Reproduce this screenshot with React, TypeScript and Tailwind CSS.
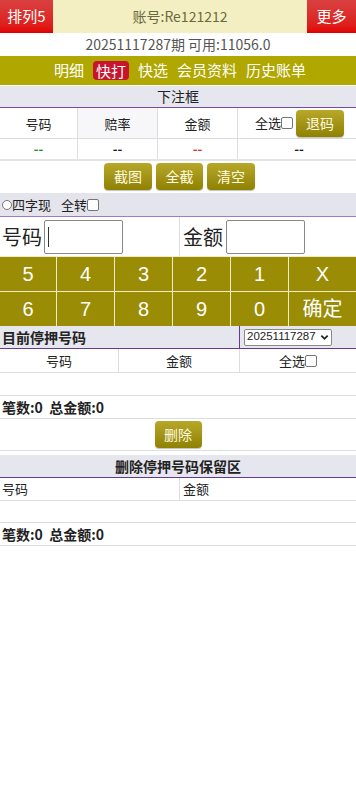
import React from 'react';

const font = { fontFamily: '"Microsoft YaHei", "Noto Sans CJK SC", "Liberation Sans", sans-serif' };

function OliveButton({ label, className = '' }: { label: string; className?: string }) {
  return (
    <button
      className={`h-[27px] rounded-[4px] bg-gradient-to-b from-[#b8a828] to-[#8f8100] text-[14px] text-[#fffbe0] shadow-[0_1px_1px_rgba(0,0,0,0.25)] ${className}`}
    >
      {label}
    </button>
  );
}

function Box() {
  return <span className="inline-block h-[12px] w-[12px] rounded-[2px] border border-[#767676] bg-white align-middle" />;
}

const keys = ['5', '4', '3', '2', '1', 'X', '6', '7', '8', '9', '0', '确定'];

export default function App() {
  return (
    <div className="min-h-[789px] w-[356px] bg-white text-[14px] text-[#222]" style={font}>
      {/* top bar */}
      <div className="flex h-[33px]">
        <div className="flex w-[53px] items-center justify-center bg-gradient-to-b from-[#d84040] to-[#e00000] text-[15px] text-white">
          排列5
        </div>
        <div className="flex flex-1 items-center justify-center bg-[#f3efc3] text-[14px] text-[#6b6a3c]">
          账号:Re121212
        </div>
        <div className="flex w-[49px] items-center justify-center bg-gradient-to-b from-[#d84040] to-[#e00000] text-[15px] text-white">
          更多
        </div>
      </div>

      <div className="flex h-[23px] items-center justify-center text-[14px] text-[#555]">
        20251117287期 可用:11056.0
      </div>

      {/* nav */}
      <div className="flex h-[29px] items-center justify-center gap-[9px] bg-[#b0a700] pl-[4px] text-[15px] text-white">
        <span>明细</span>
        <span className="rounded-[4px] bg-[#c8142c] px-[3px] leading-[19px]">快打</span>
        <span>快选</span>
        <span>会员资料</span>
        <span>历史账单</span>
      </div>

      <div className="mt-[1px] flex h-[22px] items-center justify-center border-b border-[#7a4a9a] bg-[#e6e6ee] text-[14px]">
        下注框
      </div>

      {/* bet table */}
      <div className="grid h-[31px] grid-cols-[78px_80px_80px_1fr] border-b border-[#ddd] text-[13px]">
        <div className="flex items-center justify-center border-r border-[#ddd] pt-[2px]">号码</div>
        <div className="flex items-center justify-center border-r border-[#ddd] bg-[#f7f7fa] pt-[2px]">赔率</div>
        <div className="flex items-center justify-center border-r border-[#ddd] pt-[2px]">金额</div>
        <div className="flex items-center justify-end gap-[3px] pr-[12px]">
          <span className="flex items-center">
            全选<Box />
          </span>
          <OliveButton label="退码" className="w-[48px]" />
        </div>
      </div>
      <div className="grid h-[22px] grid-cols-[78px_80px_80px_1fr] border-b-2 border-[#e4e4e4] text-[13px] font-bold">
        <div className="flex items-center justify-center border-r border-[#ddd] text-[#2a8a2a]">--</div>
        <div className="flex items-center justify-center border-r border-[#ddd]">--</div>
        <div className="flex items-center justify-center border-r border-[#ddd] text-[#e03030]">--</div>
        <div className="flex items-center justify-center pl-[4px]">--</div>
      </div>

      <div className="flex h-[30px] items-center justify-center gap-[4px] pl-[3px]">
        <OliveButton label="截图" className="w-[48px]" />
        <OliveButton label="全截" className="w-[47px]" />
        <OliveButton label="清空" className="w-[48px]" />
      </div>

      <div className="mt-[2px] flex h-[24px] items-center border-b border-[#a07ad0] bg-[#e4e4ec] pl-[2px] text-[13px]">
        <span className="inline-block h-[10px] w-[10px] rounded-full border border-[#767676] bg-white" />
        <span>四字现</span>
        <span className="ml-[10px]">全转</span>
        <Box />
      </div>

      {/* inputs */}
      <div className="flex h-[39px] items-center">
        <div className="flex h-full w-[180px] items-center border-r border-[#ddd] pl-[2px]">
          <span className="text-[20px]">号码</span>
          <div className="ml-[2px] flex h-[34px] w-[79px] items-center rounded-[2px] border border-[#888] pl-[3px]">
            <span className="h-[20px] w-[1px] bg-[#333]" />
          </div>
        </div>
        <div className="flex items-center pl-[3px]">
          <span className="text-[20px]">金额</span>
          <div className="ml-[3px] h-[34px] w-[79px] rounded-[2px] border border-[#888]" />
        </div>
      </div>

      {/* keypad */}
      <div className="grid grid-cols-[56px_57px_57px_57px_57px_1fr] gap-[1px] bg-[#f0ecc4] pt-[1px]">
        {keys.map((k) => (
          <div
            key={k}
            className="flex h-[34px] items-center justify-center bg-[#9b8c05] text-[20px] text-white"
            style={{ fontFamily: '"Liberation Sans", "Noto Sans CJK SC", sans-serif' }}
          >
            {k}
          </div>
        ))}
      </div>

      {/* stopped numbers */}
      <div className="flex h-[23px] border-b border-[#6a3a8a] bg-[#e6e6ee]">
        <div className="flex w-[240px] items-center border-r border-[#6a3a8a] pl-[2px] text-[14px] font-bold">目前停押号码</div>
        <div className="flex items-center pl-[4px]">
          <div
            className="flex h-[17px] w-[88px] items-center justify-between rounded-[2px] border border-[#888] bg-white pl-[2px] pr-[2px] text-[11.5px]"
            style={{ fontFamily: '"Liberation Sans", sans-serif' }}
          >
            20251117287
            <svg width="9" height="9" viewBox="0 0 10 10">
              <path d="M1.5 3 L5 6.5 L8.5 3" stroke="#222" strokeWidth="2" fill="none" />
            </svg>
          </div>
        </div>
      </div>
      <div className="grid h-[24px] grid-cols-[119px_121px_1fr] border-b border-[#ddd] text-[13px]">
        <div className="flex items-center justify-center border-r border-[#ddd]">号码</div>
        <div className="flex items-center justify-center border-r border-[#ddd]">金额</div>
        <div className="flex items-center justify-center">
          全选<Box />
        </div>
      </div>
      <div className="h-[23px] border-b border-[#ddd]" />
      <div className="flex h-[23px] items-center border-b border-[#ddd] pl-[2px] text-[14px] font-bold">笔数:0&nbsp;&nbsp;总金额:0</div>
      <div className="flex h-[32px] items-center justify-center border-b border-[#ddd]">
        <OliveButton label="删除" className="h-[26px] w-[47px]" />
      </div>

      <div className="mt-[4px] flex h-[23px] items-center justify-center border-b border-[#6a3a8a] bg-[#e6e6ee] text-[14px] font-bold">
        删除停押号码保留区
      </div>
      <div className="grid h-[23px] grid-cols-[180px_1fr] border-b border-[#ddd] text-[13px]">
        <div className="flex items-center border-r border-[#ddd] pl-[2px]">号码</div>
        <div className="flex items-center pl-[3px]">金额</div>
      </div>
      <div className="h-[22px] border-b border-[#ddd]" />
      <div className="flex h-[23px] items-center border-b border-[#ddd] pl-[2px] text-[14px] font-bold">笔数:0&nbsp;&nbsp;总金额:0</div>
    </div>
  );
}
